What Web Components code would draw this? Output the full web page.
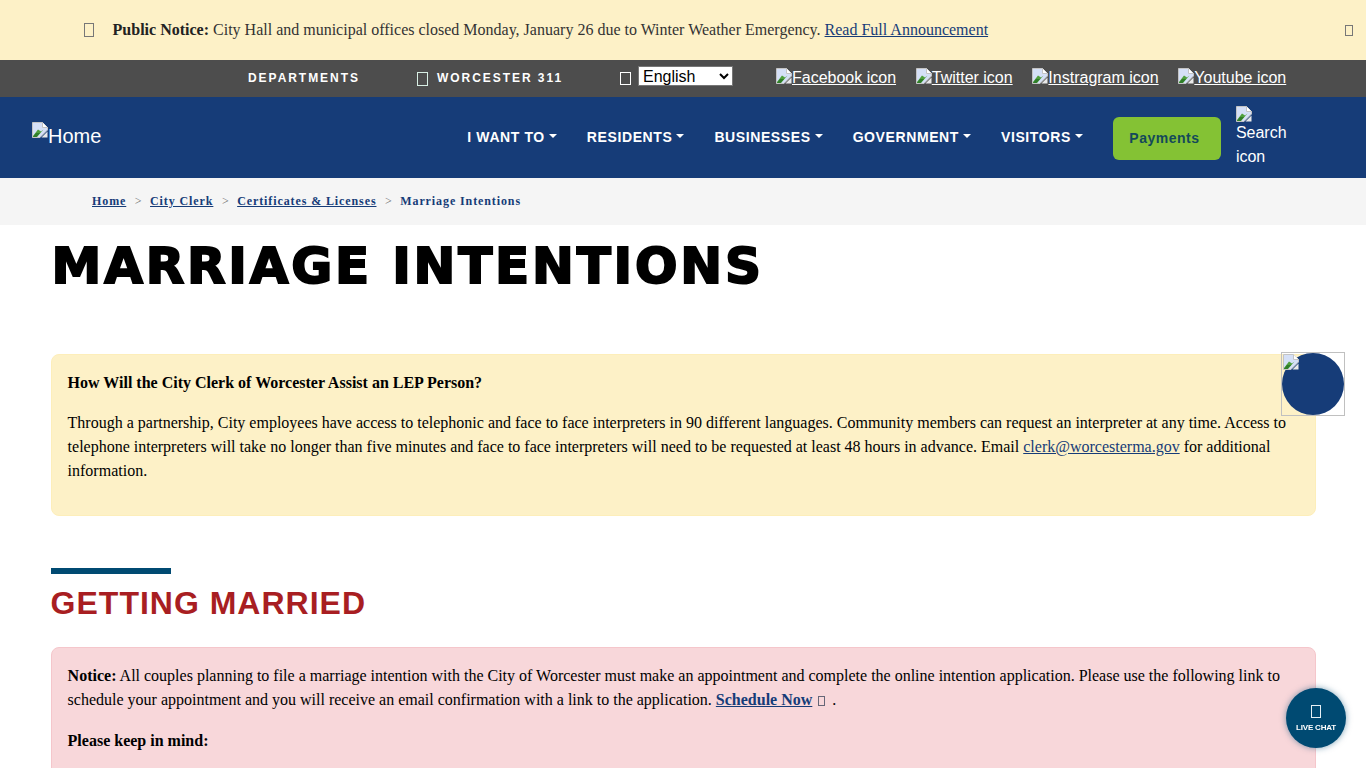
<!DOCTYPE html>
<html lang="en">
<head>
<meta charset="utf-8">
<title>Marriage Intentions</title>
<style>
  html, body { margin: 0; padding: 0; height: 768px; overflow: hidden; background: #fff; }
  body { font-family: "Liberation Serif", serif; color: #000; }
</style>
</head>
<body>
<site-notice></site-notice>
<utility-bar></utility-bar>
<main-nav></main-nav>
<bread-crumbs></bread-crumbs>
<page-content></page-content>
<floating-tools></floating-tools>

<script>
// Shared bits
const brokenImg = `<svg class="broken" width="16" height="16" viewBox="0 0 16 16" aria-hidden="true">
  <path d="M0.5 0.5H10.5L15.5 5.5V8L8 15.5H0.5Z" fill="#d5e0f7" stroke="#c4c4c4"/>
  <path d="M10.5 0.5V5.5H15.5" fill="#fff" stroke="#c4c4c4"/>
  <path d="M1 14L6 7.5L9 9.5L11.5 7.5L5 15H1Z" fill="#4f9f3d"/>
  <path d="M1 15L4 11L8 11L4.5 15Z" fill="#2f7d2a"/>
  <path d="M9.5 15.5L15.5 9.5V15.5Z" fill="#e9e9e9"/>
</svg>`;
const tofu = (w, h, color, extra = '') => `<span style="display:inline-block;box-sizing:border-box;flex:none;width:${w}px;height:${h}px;border:1px solid ${color};${extra}"></span>`;

class SiteNotice extends HTMLElement {
  constructor() {
    super();
    this.attachShadow({ mode: 'open' });
  }
  connectedCallback() {
    this.shadowRoot.innerHTML = `
      <style>
        :host { display: block; }
        .bar {
          height: 60px;
          box-sizing: border-box;
          background: #fdf1c7;
          display: flex;
          align-items: center;
          padding: 0 13px 0 84px;
          font: 16px/24px "Liberation Serif", serif;
          color: #333;
        }
        .icon { display: flex; width: 28.6px; flex: none; }
        p { margin: 0; flex: 1; }
        b { color: #222; }
        a { color: #163c78; text-decoration: underline; }
      </style>
      <div class="bar">
        <span class="icon">${tofu(10, 14, '#777')}</span>
        <p><b>Public Notice:</b> City Hall and municipal offices closed Monday, January 26 due to Winter Weather Emergency. <a href="#">Read Full Announcement</a></p>
        ${tofu(8, 11, '#777')}
      </div>
    `;
  }
}

class UtilityBar extends HTMLElement {
  constructor() {
    super();
    this.attachShadow({ mode: 'open' });
  }
  connectedCallback() {
    const socials = ['Facebook', 'Twitter', 'Instragram', 'Youtube'];
    this.shadowRoot.innerHTML = `
      <style>
        :host { display: block; }
        .bar {
          height: 37px;
          box-sizing: border-box;
          background: #4d4d4d;
          color: #fff;
          display: flex;
          align-items: center;
          padding: 0 0 2px 248px;
          font-family: "Liberation Sans", sans-serif;
        }
        .link { font-size: 12px; font-weight: 700; letter-spacing: 1.95px; white-space: nowrap; }
        .dept { width: 169px; flex: none; }
        .w311 { width: 203px; flex: none; display: flex; align-items: center; gap: 9px; }
        .lang { width: 156px; flex: none; display: flex; align-items: center; gap: 7px; }
        select {
          width: 95px; height: 20px; padding: 0; margin-bottom: 4px;
          font: 16px "Liberation Sans", sans-serif;
          background: #fff; color: #000; border: 1px solid #767676; border-radius: 0;
        }
        .socials { display: flex; gap: 19.7px; }
        .socials a { color: #fff; font-size: 16px; display: flex; align-items: flex-start; text-decoration: underline; line-height: 18px; white-space: nowrap; }
        .broken { flex: none; margin-top: -1px; }
      </style>
      <div class="bar">
        <span class="link dept">DEPARTMENTS</span>
        <span class="link w311">${tofu(11, 14, '#d8efe4', 'margin-top:2px;')}WORCESTER 311</span>
        <span class="lang">${tofu(11, 13, '#fff', 'margin-top:2px;')}<select><option>English</option></select></span>
        <span class="socials">
          ${socials.map(s => `<a href="#">${brokenImg}${s} icon</a>`).join('')}
        </span>
      </div>
    `;
  }
}

class MainNav extends HTMLElement {
  constructor() {
    super();
    this.attachShadow({ mode: 'open' });
  }
  connectedCallback() {
    const items = ['I WANT TO', 'RESIDENTS', 'BUSINESSES', 'GOVERNMENT', 'VISITORS'];
    this.shadowRoot.innerHTML = `
      <style>
        :host { display: block; }
        nav {
          height: 81px;
          box-sizing: border-box;
          background: #163c78;
          color: #fff;
          display: flex;
          align-items: center;
          padding: 0 0 2px 32px;
          font-family: "Liberation Sans", sans-serif;
        }
        .home { display: flex; align-items: flex-start; font-size: 20px; line-height: 24px; flex: none; margin-top: -1px; }
        .home .broken { margin-top: -2px; }
        ul { display: flex; gap: 30px; list-style: none; margin: 0 0 0 366px; padding: 0; }
        li { font-size: 14px; font-weight: 700; letter-spacing: .6px; white-space: nowrap; display: flex; align-items: center; gap: 4px; }
        li::after {
          content: ""; width: 0; height: 0;
          border-top: 4px solid #fff;
          border-left: 4px solid transparent;
          border-right: 4px solid transparent;
          margin-bottom: 2px;
        }
        .pay {
          margin: 4px 0 0 30px; width: 108px; height: 43px; flex: none;
          box-sizing: border-box; padding: 0 5px 2px 0;
          background: #84c234; color: #14495a; border-radius: 6px;
          display: flex; align-items: center; justify-content: center;
          font-size: 14px; font-weight: 700; letter-spacing: .5px;
        }
        .search { margin: 8px 0 0 15px; width: 64px; font-size: 16px; line-height: 24px; align-self: flex-start; }
        .search .broken { display: block; margin-top: 1px; margin-bottom: -1px; }
      </style>
      <nav>
        <span class="home">${brokenImg}Home</span>
        <ul>${items.map(i => `<li>${i}</li>`).join('')}</ul>
        <span class="pay">Payments</span>
        <span class="search">${brokenImg}Search icon</span>
      </nav>
    `;
  }
}

class BreadCrumbs extends HTMLElement {
  constructor() {
    super();
    this.attachShadow({ mode: 'open' });
  }
  connectedCallback() {
    this.shadowRoot.innerHTML = `
      <style>
        :host { display: block; }
        ol {
          height: 47px; box-sizing: border-box; margin: 0;
          background: #f5f5f5;
          list-style: none;
          display: flex; align-items: center;
          padding: 0 0 0 92px;
          font: 700 12px "Liberation Serif", serif;
          letter-spacing: .9px;
          color: #163c78;
        }
        a { color: #163c78; }
        .sep { color: #666; font-weight: 400; margin: 0 8.5px; letter-spacing: 0; }
      </style>
      <ol>
        <li><a href="#">Home</a></li><li class="sep">&gt;</li>
        <li><a href="#">City Clerk</a></li><li class="sep">&gt;</li>
        <li><a href="#">Certificates &amp; Licenses</a></li><li class="sep">&gt;</li>
        <li>Marriage Intentions</li>
      </ol>
    `;
  }
}

// Coloured info box, content is slotted
class InfoBox extends HTMLElement {
  constructor() {
    super();
    this.attachShadow({ mode: 'open' });
  }
  connectedCallback() {
    const tone = this.getAttribute('tone') || 'warning';
    const colors = tone === 'danger'
      ? 'background:#f8d7da;border-color:#f5c6cb;'
      : 'background:#fdf1c7;border-color:#fdeeba;';
    this.shadowRoot.innerHTML = `
      <style>
        :host { display: block; }
        .box {
          border: 1px solid;
          ${colors}
          border-radius: 8px;
          padding: 16px;
          font: 16px/24px "Liberation Serif", serif;
        }
      </style>
      <div class="box"><slot></slot></div>
    `;
  }
}

class PageContent extends HTMLElement {
  constructor() {
    super();
    this.attachShadow({ mode: 'open' });
  }
  connectedCallback() {
    this.shadowRoot.innerHTML = `
      <style>
        :host { display: block; padding: 0 50.4px 0 50.6px; }
        h1 {
          margin: 11px 0 0;
          font: 700 50px/60px "DejaVu Sans", sans-serif;
          -webkit-text-stroke: 2px #000;
          letter-spacing: 2.8px;
          color: #000;
          padding-left: 1px;
        }
        info-box { margin-top: 58px; }
        .rule { width: 120px; height: 6px; background: #004a72; margin-top: 52px; }
        h2 {
          margin: 9px 0 0;
          font: 700 32px/40px "Liberation Sans", sans-serif;
          letter-spacing: 1px;
          color: #a81e22;
        }
        .danger { margin-top: 24px; }
        p { margin: 0 0 16px; }
        a { color: #163c78; }
        .last { margin-bottom: 0; }
        .ext { display: inline-block; margin: 0 3px 0 2px; vertical-align: -1px; }
      </style>
      <h1>MARRIAGE INTENTIONS</h1>
      <info-box>
        <p><b>How Will the City Clerk of Worcester Assist an LEP Person?</b></p>
        <p>Through a partnership, City employees have access to telephonic and face to face interpreters in 90 different languages. Community members can request an interpreter at any time. Access to telephone interpreters will take no longer than five minutes and face to face interpreters will need to be requested at least 48 hours in advance. Email <a href="#">clerk@worcesterma.gov</a> for additional information.</p>
      </info-box>
      <div class="rule"></div>
      <h2>GETTING MARRIED</h2>
      <info-box class="danger" tone="danger">
        <p><b>Notice:</b> All couples planning to file a marriage intention with the City of Worcester must make an appointment and complete the online intention application. Please use the following link to schedule your appointment and you will receive an email confirmation with a link to the application. <a href="#"><b>Schedule Now</b></a> <span class="ext">${tofu(7, 10, '#667')}</span> .</p>
        <p><b>Please keep in mind:</b></p>
        <p class="last">&nbsp;</p>
      </info-box>
    `;
  }
}

// Overlays: accessibility launcher and live chat bubble
class FloatingTools extends HTMLElement {
  constructor() {
    super();
    this.attachShadow({ mode: 'open' });
  }
  connectedCallback() {
    this.shadowRoot.innerHTML = `
      <style>
        :host { display: block; }
        .a11y {
          position: fixed; left: 1281px; top: 352px;
          width: 64px; height: 64px; box-sizing: border-box;
          border: 1px solid #c0c0c0;
        }
        .a11y i { position: absolute; inset: 0; border-radius: 50%; background: #163c78; }
        .a11y .broken { position: absolute; left: 1px; top: 1px; }
        .chat {
          position: fixed; left: 1286px; top: 688px;
          width: 60px; height: 60px; border-radius: 50%;
          background: #004a72; color: #fff;
          box-shadow: 0 0 6px rgba(0, 74, 114, .5);
          display: flex; flex-direction: column; align-items: center; justify-content: center; gap: 5px;
          font: 700 8px "Liberation Sans", sans-serif;
          letter-spacing: -.2px;
        }
      </style>
      <div class="a11y"><i></i>${brokenImg}</div>
      <div class="chat">${tofu(10, 13, '#e6f0f5')}<span>LIVE CHAT</span></div>
    `;
  }
}

customElements.define('site-notice', SiteNotice);
customElements.define('utility-bar', UtilityBar);
customElements.define('main-nav', MainNav);
customElements.define('bread-crumbs', BreadCrumbs);
customElements.define('info-box', InfoBox);
customElements.define('page-content', PageContent);
customElements.define('floating-tools', FloatingTools);
</script>
</body>
</html>
